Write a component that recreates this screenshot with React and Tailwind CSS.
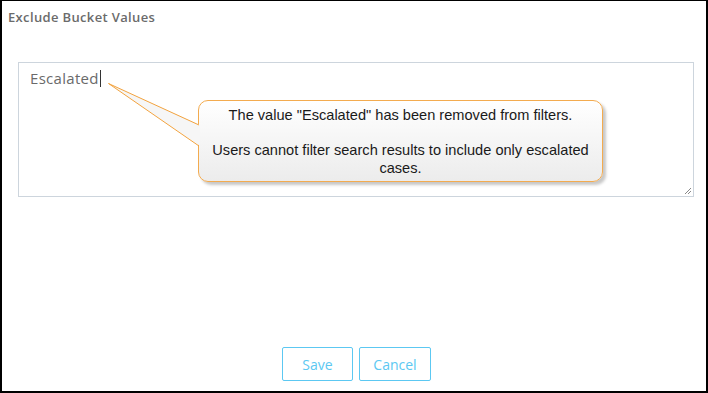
export default function App() {
  return (
    <div className="w-[708px] h-[393px] bg-white border-t border-l-2 border-r-2 border-b-2 border-black flex flex-col" style={{ fontFamily: '"Open Sans", sans-serif' }}>
      <div className="pl-[6px] pt-[8px] text-[13px] leading-[16px] font-semibold tracking-[0.35px] text-[#6b6b6b]">Exclude Bucket Values</div>
      <div className="relative ml-[16px] mt-[37px] w-[676px] h-[135px] border border-[#cdd5dd]">
        <div className="pl-[11px] pt-[5px] text-[15px] leading-[20px] tracking-[0.3px] text-[#6a6a6a] flex items-center">
          Escalated<span className="inline-block w-px h-[17px] bg-[#333] ml-[1px]"></span>
        </div>
        <svg className="absolute right-[1px] bottom-[1px]" width="8" height="8" viewBox="0 0 8 8">
          <line x1="1" y1="7" x2="7" y2="1" stroke="#888" strokeWidth="1" />
          <line x1="4" y1="7" x2="7" y2="4" stroke="#888" strokeWidth="1" />
        </svg>
        <div className="absolute left-[179px] top-[37px] w-[405px] h-[82px] rounded-[10px] border border-[#f3ab4f] bg-gradient-to-b from-white to-[#ececec] shadow-[3px_3px_3px_rgba(0,0,0,0.22)] px-[8px] pt-[5px] text-center text-[14.6px] leading-[18px] text-[#1a1a1a]" style={{ fontFamily: '"Liberation Sans", Arial, sans-serif' }}>
          <p>The value "Escalated" has been removed from filters.</p>
          <p className="mt-[17px]">Users cannot filter search results to include only escalated cases.</p>
        </div>
        <svg className="absolute left-0 top-0 overflow-visible pointer-events-none" width="200" height="100">
          <polygon points="89.5,20.5 181,62 181,83" fill="#f6f6f6" />
          <polyline points="180,62 89.5,20.5 180,83" fill="none" stroke="#f3a33e" strokeWidth="1" />
        </svg>
      </div>
      <div className="mt-auto mb-[10px] flex justify-center gap-[6px] pl-[5px]">
        <button className="w-[71px] h-[34px] border border-[#5cc8f2] rounded-[2px] text-[14px] text-[#5cc8f2]">Save</button>
        <button className="w-[72px] h-[34px] border border-[#5cc8f2] rounded-[2px] text-[14px] text-[#5cc8f2]">Cancel</button>
      </div>
    </div>
  )
}
